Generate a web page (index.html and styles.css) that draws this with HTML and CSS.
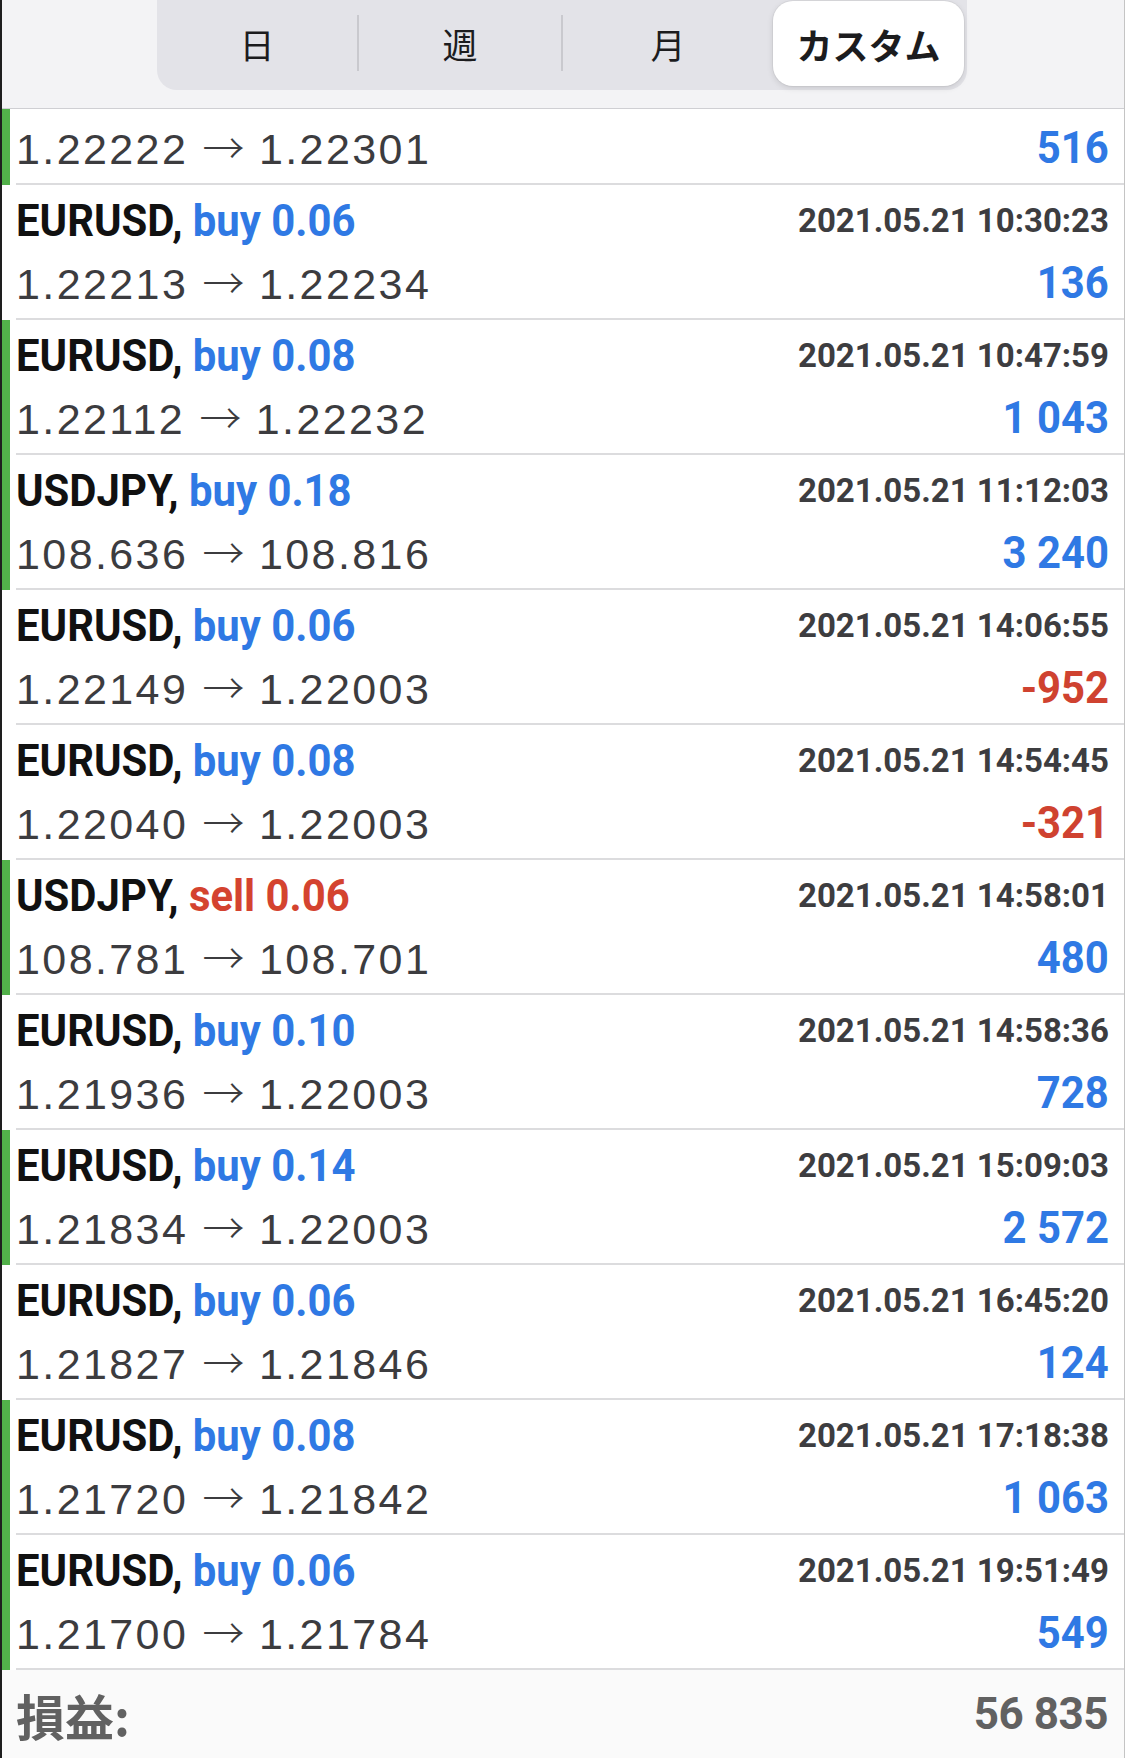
FILE: index.html
```html
<!DOCTYPE html>
<html>
<head>
	<meta charset="utf-8">
	<meta name="viewport" content="width=1125">
	<title>履歴</title>
	<link rel="stylesheet" href="styles.css">
</head>
<body>

<div class="screen">
	<div class="topbar">
		<div class="segments">
			<div class="segment">日</div>
			<div class="segment split">週</div>
			<div class="segment split">月</div>
			<div class="segment active">カスタム</div>
		</div>
	</div>

	<div class="deals">
		<div class="deal marked first">
			<div class="deal-body">
				<div class="line"></div>
				<div class="line">
					<span class="price">1.22222 <span class="arrow">→</span> 1.22301</span>
					<span class="profit">516</span>
				</div>
			</div>
		</div>

		<div class="deal">
			<div class="deal-body">
				<div class="line">
					<span class="sym">EURUSD, <span class="buy">buy 0.06</span></span>
					<span class="date">2021.05.21 10:30:23</span>
				</div>
				<div class="line">
					<span class="price">1.22213 <span class="arrow">→</span> 1.22234</span>
					<span class="profit">136</span>
				</div>
			</div>
		</div>

		<div class="deal marked">
			<div class="deal-body">
				<div class="line">
					<span class="sym">EURUSD, <span class="buy">buy 0.08</span></span>
					<span class="date">2021.05.21 10:47:59</span>
				</div>
				<div class="line">
					<span class="price">1.22112 <span class="arrow">→</span> 1.22232</span>
					<span class="profit">1 043</span>
				</div>
			</div>
		</div>

		<div class="deal marked">
			<div class="deal-body">
				<div class="line">
					<span class="sym">USDJPY, <span class="buy">buy 0.18</span></span>
					<span class="date">2021.05.21 11:12:03</span>
				</div>
				<div class="line">
					<span class="price">108.636 <span class="arrow">→</span> 108.816</span>
					<span class="profit">3 240</span>
				</div>
			</div>
		</div>

		<div class="deal">
			<div class="deal-body">
				<div class="line">
					<span class="sym">EURUSD, <span class="buy">buy 0.06</span></span>
					<span class="date">2021.05.21 14:06:55</span>
				</div>
				<div class="line">
					<span class="price">1.22149 <span class="arrow">→</span> 1.22003</span>
					<span class="profit loss">-952</span>
				</div>
			</div>
		</div>

		<div class="deal">
			<div class="deal-body">
				<div class="line">
					<span class="sym">EURUSD, <span class="buy">buy 0.08</span></span>
					<span class="date">2021.05.21 14:54:45</span>
				</div>
				<div class="line">
					<span class="price">1.22040 <span class="arrow">→</span> 1.22003</span>
					<span class="profit loss">-321</span>
				</div>
			</div>
		</div>

		<div class="deal marked">
			<div class="deal-body">
				<div class="line">
					<span class="sym">USDJPY, <span class="sell">sell 0.06</span></span>
					<span class="date">2021.05.21 14:58:01</span>
				</div>
				<div class="line">
					<span class="price">108.781 <span class="arrow">→</span> 108.701</span>
					<span class="profit">480</span>
				</div>
			</div>
		</div>

		<div class="deal">
			<div class="deal-body">
				<div class="line">
					<span class="sym">EURUSD, <span class="buy">buy 0.10</span></span>
					<span class="date">2021.05.21 14:58:36</span>
				</div>
				<div class="line">
					<span class="price">1.21936 <span class="arrow">→</span> 1.22003</span>
					<span class="profit">728</span>
				</div>
			</div>
		</div>

		<div class="deal marked">
			<div class="deal-body">
				<div class="line">
					<span class="sym">EURUSD, <span class="buy">buy 0.14</span></span>
					<span class="date">2021.05.21 15:09:03</span>
				</div>
				<div class="line">
					<span class="price">1.21834 <span class="arrow">→</span> 1.22003</span>
					<span class="profit">2 572</span>
				</div>
			</div>
		</div>

		<div class="deal">
			<div class="deal-body">
				<div class="line">
					<span class="sym">EURUSD, <span class="buy">buy 0.06</span></span>
					<span class="date">2021.05.21 16:45:20</span>
				</div>
				<div class="line">
					<span class="price">1.21827 <span class="arrow">→</span> 1.21846</span>
					<span class="profit">124</span>
				</div>
			</div>
		</div>

		<div class="deal marked">
			<div class="deal-body">
				<div class="line">
					<span class="sym">EURUSD, <span class="buy">buy 0.08</span></span>
					<span class="date">2021.05.21 17:18:38</span>
				</div>
				<div class="line">
					<span class="price">1.21720 <span class="arrow">→</span> 1.21842</span>
					<span class="profit">1 063</span>
				</div>
			</div>
		</div>

		<div class="deal marked">
			<div class="deal-body">
				<div class="line">
					<span class="sym">EURUSD, <span class="buy">buy 0.06</span></span>
					<span class="date">2021.05.21 19:51:49</span>
				</div>
				<div class="line">
					<span class="price">1.21700 <span class="arrow">→</span> 1.21784</span>
					<span class="profit">549</span>
				</div>
			</div>
		</div>
	</div>

	<div class="total">
		<span class="total-label">損益:</span>
		<span class="total-value">56 835</span>
	</div>
</div>

</body>
</html>
```

FILE: styles.css
```css
html, body {
	margin: 0;
	background: white;
}
body {
	font-family: Roboto, "Noto Sans CJK JP", sans-serif;
	-webkit-font-smoothing: antialiased;
}
.screen {
	height: 1758px;
	overflow: hidden;
	border-left: 2px solid #1e1e1e;
	border-right: 1px solid #c4c4c4;
	box-sizing: border-box;
}

/* --------------- */

.topbar {
	height: 108px;
	background: #f3f3f5;
	border-bottom: 1px solid #cfcfd3;
	position: relative;
	z-index: 2;
}
.segments {
	display: grid;
	grid-template-columns: 200px 204px 212px 1fr;
	margin-left: 155px;
	width: 810px;
	height: 90px;
	padding: 0 3px 4px 0;
	box-sizing: border-box;
	background: #e3e3e8;
	border-radius: 0 0 20px 20px;
}
.segment {
	display: flex;
	align-items: center;
	justify-content: center;
	font-family: "Noto Sans CJK JP", sans-serif;
	font-size: 35px;
	color: #1c1c1e;
}
.segment.split {
	border-left: 2px solid transparent;
	border-image: linear-gradient(transparent 16px, #c9c9ce 16px, #c9c9ce 70px, transparent 70px) 1;
}
.segment.active {
	margin-top: 1px;
	background: white;
	border-radius: 20px;
	font-size: 36px;
	font-weight: 700;
	box-shadow: 0 2px 6px rgba(0,0,0,.12), 0 0 0 1px rgba(0,0,0,.04);
}

/* --------------- */

.deals {
	overflow: hidden;
}
.deal {
	border-left: 8px solid transparent;
	background: white;
}
.deal.marked {
	border-left-color: #52b14a;
}
.deal.first {
	margin-top: -59px;
}
.deal-body {
	margin-left: 6px;
	padding: 0 15px 7px 0;
	height: 135px;
	box-sizing: border-box;
	border-bottom: 2px solid #dcdcde;
}
.line {
	display: flex;
	align-items: center;
	justify-content: space-between;
	white-space: nowrap;
}
.line:first-child {
	height: 70px;
}
.line + .line {
	height: 56px;
}

.sym {
	display: inline-block;
	font-size: 45px;
	font-weight: 700;
	color: #111;
	transform: scaleX(.93);
	transform-origin: left center;
}
.buy { color: #2f79e4; }
.sell { color: #d4432f; }

.date {
	font-size: 33px;
	font-weight: 700;
	color: #3d3d40;
}
.price {
	margin-bottom: 6px;
	font-family: "Liberation Sans", Arial, sans-serif;
	font-size: 43px;
	color: #3c3c3f;
	letter-spacing: 2.4px;
}
.arrow {
	font-family: "Noto Sans CJK JP", sans-serif;
	font-size: 42px;
	font-weight: 300;
	letter-spacing: 0;
}
.profit {
	display: inline-block;
	font-size: 44px;
	font-weight: 700;
	color: #2f79e4;
	transform: scaleX(.95);
	transform-origin: right center;
}
.profit.loss {
	color: #cf4230;
}

/* --------------- */

.total {
	height: 88px;
	display: flex;
	align-items: center;
	justify-content: space-between;
	padding: 0 16px 0 14px;
	background: #fafafa;
	color: #616161;
	font-weight: 700;
}
.total-label {
	font-family: "Noto Sans CJK JP", sans-serif;
	font-size: 49px;
}
.total-value {
	font-size: 44px;
	letter-spacing: -0.5px;
}
```
